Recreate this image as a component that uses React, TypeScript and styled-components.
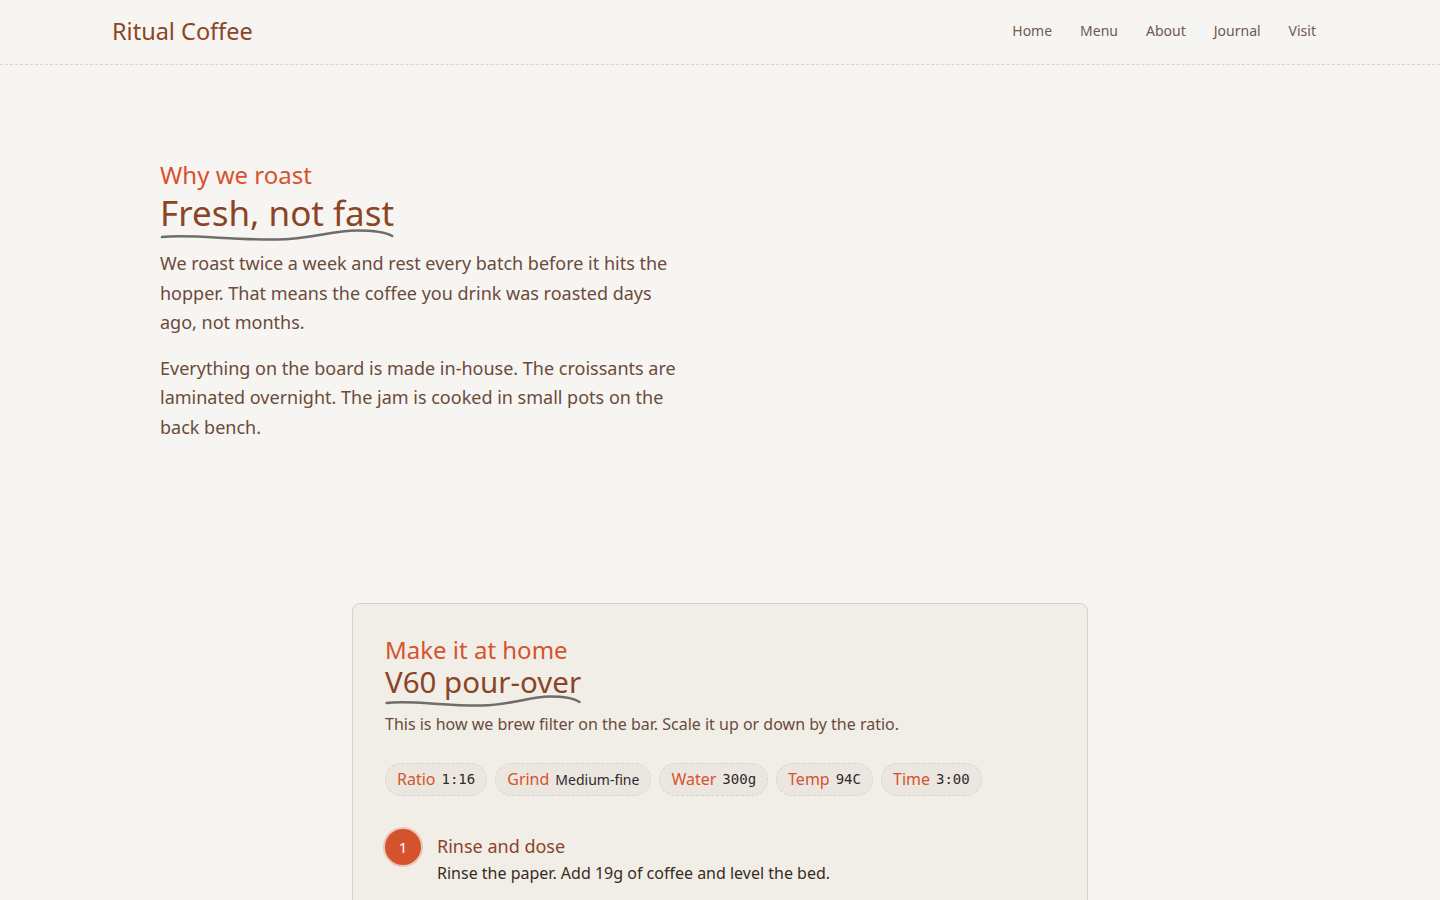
import React from "react";
import styled, { createGlobalStyle } from "styled-components";

const GlobalStyle = createGlobalStyle`
  * { box-sizing: border-box; }
  html, body { margin: 0; padding: 0; }
  body {
    background: #f7f5f2;
    font-family: "Noto Sans", "Open Sans", sans-serif;
    color: #5e4535;
  }
`;

const Header = styled.header`
  height: 65px;
  border-bottom: 1px dashed #d9d3cb;
`;

const HeaderInner = styled.div`
  max-width: 1216px;
  height: 100%;
  margin: 0 auto;
  display: flex;
  align-items: center;
  justify-content: space-between;
`;

const Logo = styled.a`
  font-size: 23.5px;
  color: #8b4526;
  text-decoration: none;
  line-height: 1;
`;

const Nav = styled.nav`
  display: flex;
  margin: 0 -2px 3px 0;
`;

const NavLink = styled.a`
  font-size: 14px;
  color: #6e5a4e;
  text-decoration: none;
  padding: 6px 14px;
`;

const Section = styled.section`
  max-width: 1120px;
  margin: 0 auto;
  padding: 96px 0 0;
`;

const Eyebrow = styled.div`
  font-size: 24px;
  color: #d6532c;
  line-height: 1.2;
`;

const TitleWrap = styled.div<{ $gap: number }>`
  display: inline-flex;
  flex-direction: column;
  margin-top: ${(p) => p.$gap}px;
`;

const Title = styled.h2<{ $size: number }>`
  margin: 0;
  font-weight: 400;
  font-size: ${(p) => p.$size}px;
  color: #8b4526;
  line-height: 1.15;
`;

/* hand-drawn underline stretched to the width of the heading above it */
const Squiggle = styled.svg`
  display: block;
  width: 0;
  min-width: 100%;
  height: 12px;
  margin-top: -4px;
`;

const Para = styled.p`
  max-width: 520px;
  margin: 8px 0 0;
  font-size: 18px;
  line-height: 1.64;
  color: #6a4b3b;
  & + & { margin-top: 16px; }
`;

const Card = styled.article`
  width: 736px;
  margin: 161px auto 0;
  background: #f1eee8;
  border: 1px solid #dccfc6;
  border-radius: 8px;
  padding: 32px 32px 40px;
`;

const CardLead = styled.p`
  margin: 6px 0 0;
  font-size: 16px;
  color: #6a4b3b;
`;

const Chips = styled.div`
  display: flex;
  gap: 8px;
  margin-top: 28px;
`;

const Chip = styled.div`
  display: inline-flex;
  align-items: center;
  gap: 6px;
  height: 33px;
  padding: 0 11px;
  border: 1px dashed #d9d2cb;
  border-radius: 999px;
  background: #ebe6e0;
`;

const ChipLabel = styled.span`
  font-size: 16px;
  color: #d6532c;
`;

const ChipValue = styled.span<{ $mono?: boolean }>`
  font-size: 14px;
  font-family: ${(p) =>
    p.$mono ? '"DejaVu Sans Mono", monospace' : '"Noto Sans", sans-serif'};
  color: #2f2a2a;
`;

const Steps = styled.ol`
  list-style: none;
  margin: 33px 0 0;
  padding: 0;
`;

const Step = styled.li`
  display: flex;
  gap: 16px;
`;

const StepNum = styled.span`
  flex: none;
  width: 36px;
  height: 36px;
  border-radius: 50%;
  background: #d4522c;
  color: #fff;
  font-size: 15px;
  display: flex;
  align-items: center;
  justify-content: center;
  box-shadow: 0 0 0 2px rgba(214, 83, 44, 0.25);
`;

const StepBody = styled.div`
  padding-top: 7px;
`;

const StepTitle = styled.div`
  font-size: 18px;
  color: #8b4526;
  line-height: 1.2;
`;

const StepText = styled.div`
  margin-top: 5px;
  font-size: 16px;
  color: #3a2a20;
`;

const Wave = () => (
  <Squiggle viewBox="0 0 232 12" preserveAspectRatio="none">
    <path
      d="M2 8 C 30 5, 70 11, 115 10.5 C 150 10, 170 1.5, 195 1.5 C 215 1.5, 225 4, 230 7"
      fill="none"
      stroke="#6f6c6a"
      strokeWidth="2.5"
      strokeLinecap="round"
      vectorEffect="non-scaling-stroke"
    />
  </Squiggle>
);

const chips = [
  { label: "Ratio", value: "1:16", mono: true },
  { label: "Grind", value: "Medium-fine", mono: false },
  { label: "Water", value: "300g", mono: true },
  { label: "Temp", value: "94C", mono: true },
  { label: "Time", value: "3:00", mono: true },
];

export default function App() {
  return (
    <>
      <GlobalStyle />
      <Header>
        <HeaderInner>
          <Logo href="#">Ritual Coffee</Logo>
          <Nav>
            {["Home", "Menu", "About", "Journal", "Visit"].map((n) => (
              <NavLink key={n} href="#">
                {n}
              </NavLink>
            ))}
          </Nav>
        </HeaderInner>
      </Header>
      <main>
        <Section>
          <Eyebrow>Why we roast</Eyebrow>
          <TitleWrap $gap={3}>
            <Title $size={35}>Fresh, not fast</Title>
            <Wave />
          </TitleWrap>
          <Para>
            We roast twice a week and rest every batch before it hits the
            hopper. That means the coffee you drink was roasted days ago, not
            months.
          </Para>
          <Para>
            Everything on the board is made in-house. The croissants are
            laminated overnight. The jam is cooked in small pots on the back
            bench.
          </Para>
        </Section>
        <Card>
          <Eyebrow>Make it at home</Eyebrow>
          <TitleWrap $gap={0}>
            <Title $size={29.5}>V60 pour-over</Title>
            <Wave />
          </TitleWrap>
          <CardLead>
            This is how we brew filter on the bar. Scale it up or down by the
            ratio.
          </CardLead>
          <Chips>
            {chips.map((c) => (
              <Chip key={c.label}>
                <ChipLabel>{c.label}</ChipLabel>
                <ChipValue $mono={c.mono}>{c.value}</ChipValue>
              </Chip>
            ))}
          </Chips>
          <Steps>
            <Step>
              <StepNum>1</StepNum>
              <StepBody>
                <StepTitle>Rinse and dose</StepTitle>
                <StepText>
                  Rinse the paper. Add 19g of coffee and level the bed.
                </StepText>
              </StepBody>
            </Step>
          </Steps>
        </Card>
      </main>
    </>
  );
}
